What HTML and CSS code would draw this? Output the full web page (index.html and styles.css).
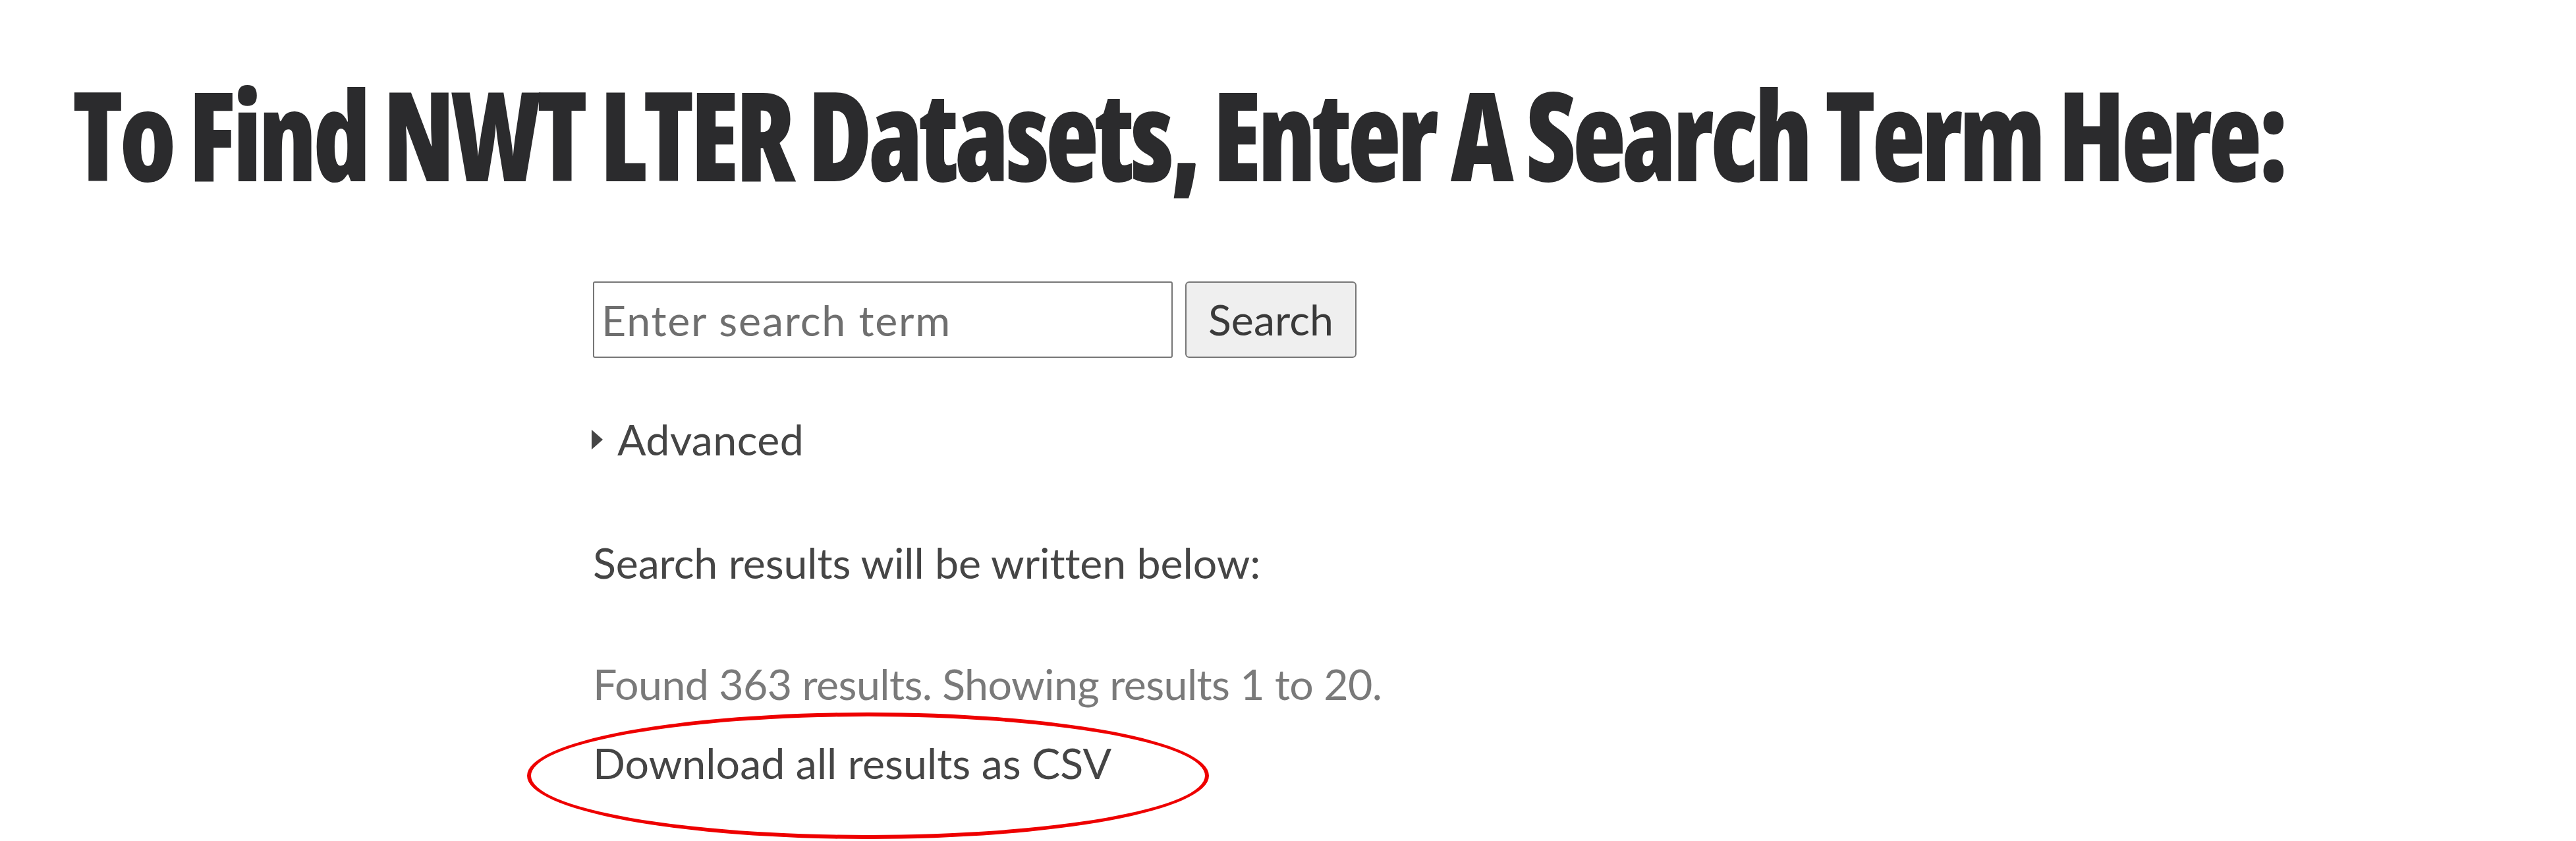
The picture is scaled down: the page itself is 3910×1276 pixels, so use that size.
FILE: index.html
```html
<!DOCTYPE html>
<html lang="en">
<head>
<meta charset="utf-8">
<title>NWT LTER Data Search</title>
<link rel="stylesheet" href="styles.css">
</head>
<body>
<main class="page">
  <h1 class="title">To Find NWT LTER Datasets, Enter A Search Term Here:</h1>
  <section class="search">
    <form class="search-form">
      <input class="search-input" type="text" placeholder="Enter search term">
      <button class="search-btn" type="button">Search</button>
    </form>
    <div class="advanced"><span class="caret"></span><span>Advanced</span></div>
    <p class="note">Search results will be written below:</p>
    <p class="found">Found 363 results. Showing results 1 to 20.</p>
    <div class="download-wrap">
      <a class="download" href="#">Download all results as CSV</a>
      <span class="ring"></span>
    </div>
  </section>
</main>
</body>
</html>
```
FILE: styles.css
```css
html, body {
  margin: 0;
  padding: 0;
  background: #ffffff;
}
body {
  font-family: "Lato", "Open Sans", sans-serif;
  font-size: 64.5px;
  line-height: 1.2;
  color: #454545;
}
.page {
  box-sizing: border-box;
  min-height: 1276px;
  padding-top: 74px;
  padding-bottom: 120px;
}
.title {
  margin: 0 0 0 110px;
  font-family: "Open Sans", sans-serif;
  font-weight: 800;
  font-stretch: 75%;
  font-size: 188px;
  line-height: normal;
  letter-spacing: -6px;
  color: #2b2b2d;
  white-space: nowrap;
  transform: scaleX(0.887);
  transform-origin: left center;
}
.search {
  margin-left: 900px;
  padding-top: 97px;
}
.search-form {
  display: flex;
  gap: 19px;
  height: 116px;
  margin: 0;
}
.search-input {
  box-sizing: border-box;
  width: 880px;
  height: 116px;
  margin: 0;
  padding: 0 11px;
  border: 2px solid #767676;
  border-radius: 3px;
  font: inherit;
  color: #454545;
  background: #fff;
}
.search-input::placeholder {
  color: #6f6f6f;
  letter-spacing: 1.8px;
}
.search-btn {
  box-sizing: border-box;
  height: 116px;
  width: 260px;
  margin: 0;
  padding: 0;
  border: 2px solid #767676;
  border-radius: 6px;
  background: #efefef;
  font: inherit;
  color: #3a3a3a;
}
.advanced {
  display: flex;
  align-items: center;
  gap: 22px;
  margin-top: 85px;
}
.advanced span:last-child {
  letter-spacing: 0.4px;
}
.caret {
  width: 0;
  height: 0;
  border-top: 15px solid transparent;
  border-bottom: 15px solid transparent;
  border-left: 17px solid #454545;
  margin-left: -2px;
}
.note {
  margin: 110px 0 0;
  letter-spacing: -0.1px;
}
.found {
  margin: 106px 0 0;
  color: #7a7a7a;
  letter-spacing: -0.6px;
}
.download-wrap {
  position: relative;
  margin-top: 43px;
}
.download {
  color: #454545;
  text-decoration: none;
}
.ring {
  position: absolute;
  left: -100px;
  top: -38px;
  width: 1035px;
  height: 192px;
  box-sizing: border-box;
  border: 6px solid #ee0000;
  border-radius: 50%;
  pointer-events: none;
}
```
